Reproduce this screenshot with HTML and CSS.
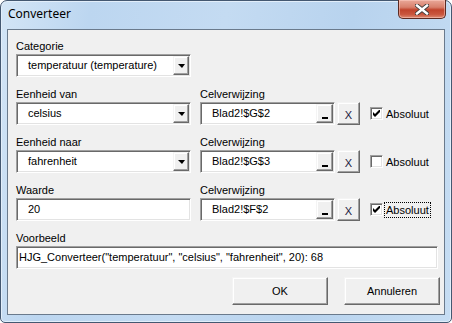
FILE: index.html
```html
<!DOCTYPE html>
<html lang="nl">

<head>
    <meta charset="UTF-8">
    <meta name="viewport" content="width=device-width, initial-scale=1.0">
    <title>Converteer</title>
    <link rel="stylesheet" href="styles.css">
</head>

<body>

    <div class="window">
        <div class="titlebar">
            <span class="title">Converteer</span>
            <div class="close">
                <svg width="14" height="11" viewBox="0 0 14 11">
                    <path d="M2 1.5 L12 9.5 M12 1.5 L2 9.5" stroke="#3a3a3a" stroke-width="4.2" stroke-linecap="square" />
                    <path d="M2 1.5 L12 9.5 M12 1.5 L2 9.5" stroke="#fff" stroke-width="2.4" stroke-linecap="square" />
                </svg>
            </div>
        </div>

        <div class="client">

            <div class="group">
                <div class="label">Categorie</div>
                <div class="combo sunken">
                    <span class="value">temperatuur (temperature)</span>
                    <span class="drop raised"><span class="arrow"></span></span>
                </div>
            </div>

            <div class="row">
                <div class="group">
                    <div class="label">Eenheid van</div>
                    <div class="combo sunken">
                        <span class="value">celsius</span>
                        <span class="drop raised"><span class="arrow"></span></span>
                    </div>
                </div>
                <div class="group ref">
                    <div class="label">Celverwijzing</div>
                    <div class="refline">
                        <div class="refedit sunken">
                            <span class="value">Blad2!$G$2</span>
                            <span class="pick raised"><span class="bar"></span></span>
                        </div>
                        <div class="xbtn raised">X</div>
                        <div class="check sunken">
                            <svg width="7" height="7" viewBox="0 0 7 7"><polygon points="0,2 2,4 7,-1 7,2 2,7 0,5" fill="#000" /></svg>
                        </div>
                        <span class="checklabel">Absoluut</span>
                    </div>
                </div>
            </div>

            <div class="row">
                <div class="group">
                    <div class="label">Eenheid naar</div>
                    <div class="combo sunken">
                        <span class="value">fahrenheit</span>
                        <span class="drop raised"><span class="arrow"></span></span>
                    </div>
                </div>
                <div class="group ref">
                    <div class="label">Celverwijzing</div>
                    <div class="refline">
                        <div class="refedit sunken">
                            <span class="value">Blad2!$G$3</span>
                            <span class="pick raised"><span class="bar"></span></span>
                        </div>
                        <div class="xbtn raised">X</div>
                        <div class="check sunken"></div>
                        <span class="checklabel">Absoluut</span>
                    </div>
                </div>
            </div>

            <div class="row">
                <div class="group">
                    <div class="label">Waarde</div>
                    <div class="text sunken"><span class="value">20</span></div>
                </div>
                <div class="group ref">
                    <div class="label">Celverwijzing</div>
                    <div class="refline">
                        <div class="refedit sunken">
                            <span class="value">Blad2!$F$2</span>
                            <span class="pick raised"><span class="bar"></span></span>
                        </div>
                        <div class="xbtn raised">X</div>
                        <div class="check sunken">
                            <svg width="7" height="7" viewBox="0 0 7 7"><polygon points="0,2 2,4 7,-1 7,2 2,7 0,5" fill="#000" /></svg>
                        </div>
                        <span class="checklabel focused">Absoluut</span>
                    </div>
                </div>
            </div>

            <div class="group">
                <div class="label">Voorbeeld</div>
                <div class="example sunken"><span class="value">HJG_Converteer("temperatuur", "celsius", "fahrenheit", 20): 68</span></div>
            </div>

            <div class="actions">
                <div class="button raised">OK</div>
                <div class="button raised">Annuleren</div>
            </div>

        </div>
    </div>

</body>

</html>
```

FILE: styles.css
```css
body {
    margin: 0;
    background: #fff;
}

.window {
    width: 452px;
    height: 323px;
    box-sizing: border-box;
    border: 1px solid #445871;
    border-radius: 7px 7px 5px 5px;
    background: linear-gradient(100deg, #d3e5f6 0%, #bcd6f0 18%, #c4dbf2 45%, #b8d3ee 70%, #c6ddf3 100%);
    box-shadow: inset 0 0 0 1px #e2eefa;
    display: flex;
    flex-direction: column;
}

.titlebar {
    height: 28px;
    display: flex;
    align-items: flex-start;
    padding-left: 7px;
}

.title {
    font-family: "Noto Sans", sans-serif;
    font-size: 12px;
    line-height: 16px;
    padding-top: 5px;
    color: #000;
}

.close {
    margin-left: auto;
    margin-right: 5px;
    margin-top: -1px;
    width: 48px;
    height: 19px;
    box-sizing: border-box;
    border: 1px solid #5b2a22;
    border-top: none;
    border-radius: 0 0 5px 5px;
    background: linear-gradient(180deg, #e9a899 0%, #d8806c 40%, #c0432c 55%, #c9563e 80%, #dc8a72 100%);
    box-shadow: inset 0 0 0 1px rgba(255, 210, 200, 0.5);
    display: flex;
    align-items: center;
    justify-content: center;
}

.client {
    margin: 0 6px;
    height: 286px;
    box-sizing: border-box;
    border: 1px solid #6a7a8c;
    background: #f0f0f0;
    padding: 9px 4px 0 8px;
    font-family: "Liberation Sans", Arial, sans-serif;
    font-size: 11px;
    color: #000;
}

.label {
    line-height: 14px;
    margin-bottom: 1px;
    white-space: nowrap;
}

.group + .group,
.group + .row,
.row + .row,
.row + .group {
    margin-top: 10px;
}

.row {
    display: flex;
}

.row .group + .group {
    margin-top: 0;
}

.ref {
    margin-left: 9px;
}

/* 3d borders like the old vba forms */
.sunken {
    box-sizing: border-box;
    border: 1px solid;
    border-color: #a0a0a0 #fff #fff #a0a0a0;
    box-shadow: inset 1px 1px #696969, inset -1px -1px #e3e3e3;
    background: #fff;
}

.raised {
    box-sizing: border-box;
    border: 1px solid;
    border-color: #f4f4f4 #696969 #696969 #f4f4f4;
    box-shadow: inset -1px -1px #a0a0a0, inset 1px 1px #fff;
    background: #f0f0f0;
}

.combo,
.text {
    width: 175px;
    height: 23px;
    display: flex;
    padding: 1px;
}

.value {
    flex: 1;
    line-height: 19px;
    white-space: nowrap;
    overflow: hidden;
}

.combo .value,
.text .value {
    padding-left: 10px;
}

.drop {
    width: 16px;
    display: flex;
    align-items: center;
    justify-content: center;
}

.arrow {
    width: 0;
    height: 0;
    border-left: 4px solid transparent;
    border-right: 3px solid transparent;
    border-top: 4px solid #000;
    margin-top: 1px;
}

.refline {
    display: flex;
    align-items: center;
}

.refedit {
    width: 135px;
    height: 23px;
    display: flex;
    padding: 1px;
}

.refedit .value {
    padding-left: 10px;
}

.pick {
    width: 17px;
    display: flex;
    align-items: flex-end;
    justify-content: center;
    padding-bottom: 3px;
}

.bar {
    width: 6px;
    height: 2px;
    background: #000;
}

.xbtn {
    width: 23px;
    height: 23px;
    margin-left: 2px;
    display: flex;
    align-items: center;
    justify-content: center;
    padding-top: 3px;
    color: #1a1a40;
}

.check {
    width: 13px;
    height: 13px;
    margin-left: 10px;
    display: flex;
    align-items: center;
    justify-content: center;
}

.checklabel {
    margin-left: 1px;
    padding: 0 1px;
    line-height: 14px;
    border: 1px dotted transparent;
}

.checklabel.focused {
    border-color: #000;
}

.example {
    width: 422px;
    height: 23px;
    padding: 1px 1px 1px 2px;
}

.actions {
    display: flex;
    justify-content: flex-end;
    gap: 16px;
    margin-top: 8px;
}

.button {
    width: 96px;
    height: 28px;
    display: flex;
    align-items: center;
    justify-content: center;
}
```
